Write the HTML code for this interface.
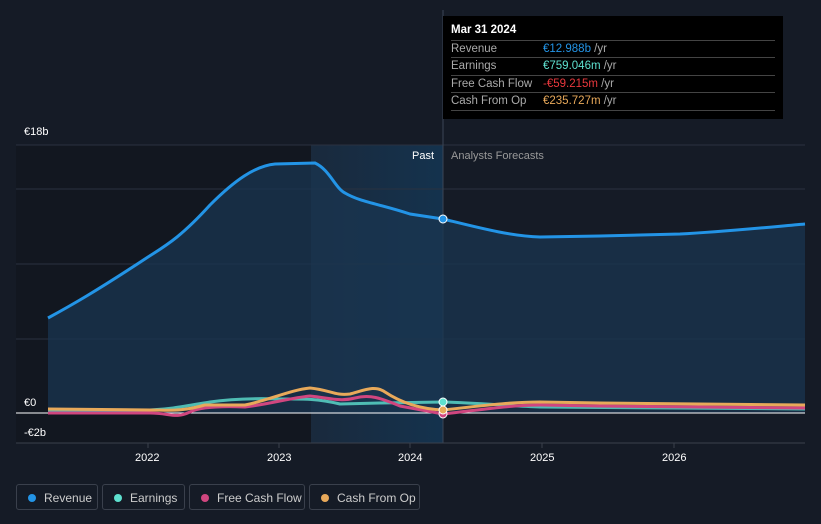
<!DOCTYPE html>
<html><head><meta charset="utf-8"><style>
body{margin:0;width:821px;height:524px;background:#151b26;font-family:"Liberation Sans",sans-serif;overflow:hidden;position:relative}
.t{position:absolute;font-size:11px;color:#fff}
.tip{position:absolute;left:443px;top:16px;width:340px;height:103px;background:#000}
.tip .h{position:absolute;left:8px;top:8px;font-size:11.5px;color:#fff;font-weight:bold}
.row{position:absolute;left:8px;width:324px;height:17px;border-top:1px solid #444;font-size:11.5px;color:#aaa;line-height:17px}
.row span.v{position:absolute;left:92px}
.leg{position:absolute;top:484px;height:26px;border:1px solid #3a404c;border-radius:3px;font-size:12px;color:#ccc;line-height:26px;box-sizing:border-box}
.leg i{position:absolute;left:11px;top:9px;width:8px;height:8px;border-radius:50%}
.leg span{position:absolute;left:27px}
</style></head><body>
<svg width="821" height="524" style="position:absolute;left:0;top:0">
<defs><linearGradient id="g" x1="0" x2="1"><stop offset="0" stop-color="#1a2b3f"/><stop offset="1" stop-color="#143552"/></linearGradient></defs>
<rect x="16" y="145" width="295" height="298" fill="#121720"/>
<rect x="311" y="145" width="132" height="298" fill="url(#g)" opacity="0.9"/>
<g stroke="#2a3240" stroke-width="1">
<line x1="16" y1="145" x2="805" y2="145"/><line x1="16" y1="189" x2="805" y2="189"/><line x1="16" y1="264" x2="805" y2="264"/><line x1="16" y1="339" x2="805" y2="339"/>
</g>
<line x1="443" y1="10" x2="443" y2="443" stroke="#3a4656"/>
<path d="M48,318 C70,306 95,292 148,257 C165,246 180,238 210,205 C235,180 255,166 275,164 L315,163 C330,170 335,188 345,193 C360,202 380,204 410,214 L443,219 C480,228 510,236 540,237 L600,236 L680,234 C720,232 760,228 805,224 L805,413 L48,413Z" fill="#1a3550" opacity="0.75"/>
<path d="M48,318 C70,306 95,292 148,257 C165,246 180,238 210,205 C235,180 255,166 275,164 L315,163 C330,170 335,188 345,193 C360,202 380,204 410,214 L443,219 C480,228 510,236 540,237 L600,236 L680,234 C720,232 760,228 805,224" fill="none" stroke="#2394e6" stroke-width="3"/>
<line x1="16" y1="413" x2="805" y2="413" stroke="#fff"/>
<line x1="16" y1="443" x2="805" y2="443" stroke="#3a404c"/>
<path d="M48,411 L150,410 C170,409 180,407 210,402 C230,399 250,398 280,399 C300,399 315,398 340,404 L380,403 L443,402 C480,403 510,406 540,407 L805,409" fill="none" stroke="#5ee0cf" stroke-width="3" opacity="0.8"/>
<path d="M48,413 L150,413 C170,413 175,419 190,412 C200,407 220,406 245,407 C270,404 290,398 310,396 C330,398 340,402 355,398 C370,394 380,398 400,406 L443,414 C480,410 510,405 540,405 L600,406 L805,408" fill="none" stroke="#d0467f" stroke-width="3"/>
<path d="M48,409 L150,410 C170,410 180,412 205,405 L245,405 C270,400 290,390 310,388 C330,390 335,396 350,394 C365,390 375,385 385,392 C400,402 420,409 443,410 C480,406 510,402 540,402 L600,403 L805,405" fill="none" stroke="#e8a95a" stroke-width="3"/>
<circle cx="443" cy="219" r="4" fill="#2394e6" stroke="#fff" stroke-width="1"/>
<circle cx="443" cy="402" r="4" fill="#5ee0cf" stroke="#fff"/>
<circle cx="443" cy="414" r="4" fill="#d0467f" stroke="#fff"/>
<circle cx="443" cy="410" r="4" fill="#e8a95a" stroke="#fff"/>
<g stroke="#3a404c"><line x1="148" y1="443" x2="148" y2="448"/><line x1="279" y1="443" x2="279" y2="448"/><line x1="410" y1="443" x2="410" y2="448"/><line x1="542" y1="443" x2="542" y2="448"/><line x1="674" y1="443" x2="674" y2="448"/></g>
</svg>
<div class="t" style="left:24px;top:126px">€18b</div>
<div class="t" style="left:24px;top:397px">€0</div>
<div class="t" style="left:24px;top:427px">-€2b</div>
<div class="t" style="left:412px;top:150px">Past</div>
<div class="t" style="left:451px;top:150px;color:#999">Analysts Forecasts</div>
<div class="t" style="left:135px;top:452px">2022</div>
<div class="t" style="left:267px;top:452px">2023</div>
<div class="t" style="left:398px;top:452px">2024</div>
<div class="t" style="left:530px;top:452px">2025</div>
<div class="t" style="left:662px;top:452px">2026</div>
<div class="tip"><div class="h">Mar 31 2024</div>
<div class="row" style="top:24px">Revenue<span class="v"><b style="font-weight:normal;color:#2394e6">€12.988b</b> /yr</span></div>
<div class="row" style="top:41px">Earnings<span class="v"><b style="font-weight:normal;color:#5ee0cf">€759.046m</b> /yr</span></div>
<div class="row" style="top:59px">Free Cash Flow<span class="v"><b style="font-weight:normal;color:#e8383d">-€59.215m</b> /yr</span></div>
<div class="row" style="top:76px;border-bottom:1px solid #444">Cash From Op<span class="v"><b style="font-weight:normal;color:#e8a95a">€235.727m</b> /yr</span></div>
</div>
<div class="leg" style="left:16px;width:82px"><i style="background:#2394e6"></i><span>Revenue</span></div>
<div class="leg" style="left:102px;width:83px"><i style="background:#5ee0cf"></i><span>Earnings</span></div>
<div class="leg" style="left:189px;width:116px"><i style="background:#d0467f"></i><span>Free Cash Flow</span></div>
<div class="leg" style="left:309px;width:111px"><i style="background:#e8a95a"></i><span>Cash From Op</span></div>
</body></html>
